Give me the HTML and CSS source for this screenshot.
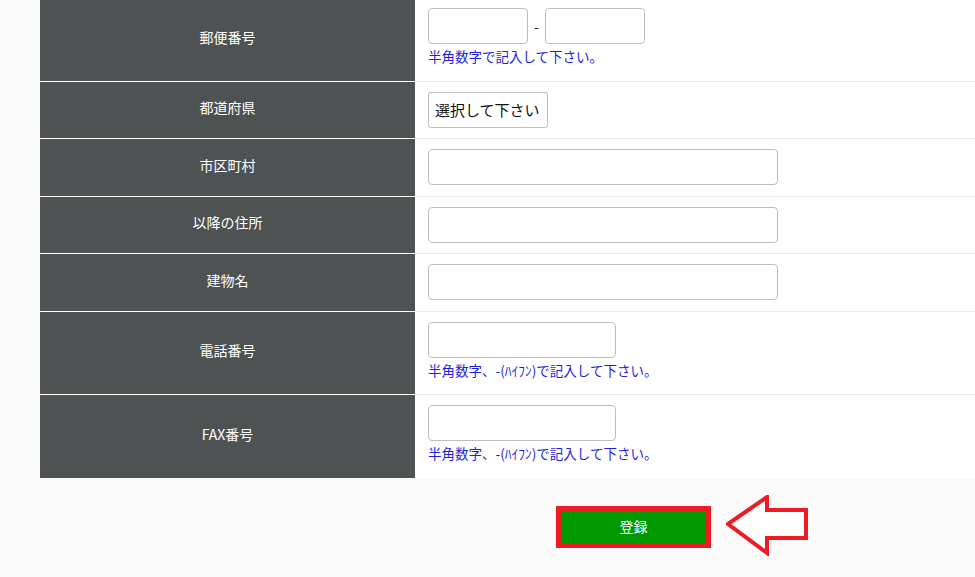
FILE: index.html
```html
<!DOCTYPE html>
<html lang="ja">
<head>
    <meta charset="UTF-8">
    <meta name="viewport" content="width=device-width, initial-scale=1.0">
    <title>会員登録</title>
    <link rel="stylesheet" href="styles.css">
</head>
<body>
    <div class="wrapper">
        <form onsubmit="return false">
            <table class="form-table">
                <tr class="tall">
                    <th>郵便番号</th>
                    <td>
                        <div class="zip">
                            <input type="text" class="input zip-input">
                            <span class="dash">-</span>
                            <input type="text" class="input zip-input">
                        </div>
                        <p class="note">半角数字で記入して下さい。</p>
                    </td>
                </tr>
                <tr>
                    <th>都道府県</th>
                    <td>
                        <select class="select">
                            <option>選択して下さい</option>
                        </select>
                    </td>
                </tr>
                <tr>
                    <th>市区町村</th>
                    <td><input type="text" class="input wide"></td>
                </tr>
                <tr>
                    <th>以降の住所</th>
                    <td><input type="text" class="input wide"></td>
                </tr>
                <tr>
                    <th>建物名</th>
                    <td><input type="text" class="input wide"></td>
                </tr>
                <tr class="tall">
                    <th>電話番号</th>
                    <td>
                        <input type="text" class="input tel">
                        <p class="note">半角数字、-(ﾊｲﾌﾝ)で記入して下さい。</p>
                    </td>
                </tr>
                <tr class="tall">
                    <th>FAX番号</th>
                    <td>
                        <input type="text" class="input tel">
                        <p class="note">半角数字、-(ﾊｲﾌﾝ)で記入して下さい。</p>
                    </td>
                </tr>
            </table>

            <div class="actions">
                <button type="submit" class="submit">登録</button>
                <svg class="arrow" width="84" height="61" viewBox="0 0 84 61">
                    <path d="M2 29 L41 2 L41 15 L80 15 L80 43 L41 43 L41 58 Z" fill="#fff" stroke="#ed1c24" stroke-width="4" stroke-linejoin="miter"/>
                </svg>
            </div>
        </form>
    </div>
</body>
</html>
```

FILE: styles.css
```css
body {
    margin: 0;
    background-color: #fafafa;
    font-family: "Noto Sans CJK JP", "Noto Sans", sans-serif;
    color: #222;
}
.wrapper {
    margin-top: -2px;
    padding-left: 40px;
}
.form-table {
    width: 100%;
    border-collapse: collapse;
}
.form-table th {
    width: 375px;
    padding: 0 0 5px;
    background: #4e5253;
    color: #fff;
    font-size: 14px;
    font-weight: normal;
    text-align: center;
    vertical-align: middle;
    border-bottom: 1px solid #fff;
}
.form-table td {
    background: #fff;
    padding: 10px 13px 10.5px;
    border-bottom: 1px solid #e9e9e9;
    vertical-align: top;
}
.form-table tr:last-child th,
.form-table tr:last-child td {
    border-bottom: none;
}
.input {
    box-sizing: border-box;
    display: block;
    height: 36px;
    margin: 0;
    border: 1px solid #bdbdbd;
    border-radius: 4px;
    background: #fff;
    font-size: 15px;
}
.zip {
    display: flex;
    align-items: center;
}
.zip-input {
    width: 100px;
}
.dash {
    width: 17px;
    text-align: center;
    font-size: 14px;
}
.wide {
    width: 350px;
}
.tel {
    width: 188px;
}
.select {
    box-sizing: border-box;
    appearance: none;
    -webkit-appearance: none;
    display: block;
    width: 120px;
    height: 36px;
    padding: 0 6px;
    border: 1px solid #bdbdbd;
    border-radius: 3px;
    background: #fff;
    color: #111;
    font-family: "Noto Sans CJK JP", sans-serif;
    font-size: 15px;
}
.note {
    margin: 2px 0 4px;
    line-height: 20px;
    font-size: 13.5px;
    color: #1f1fe0;
}
.actions {
    display: flex;
    align-items: flex-start;
    gap: 15px;
    margin-top: 17px;
    padding-left: 516px;
}
.submit {
    box-sizing: border-box;
    width: 155px;
    height: 42px;
    margin-top: 11px;
    padding: 0 0 2px;
    border: 5px solid #ed1c24;
    background: #009900;
    color: #fff;
    font-family: "Noto Sans CJK JP", sans-serif;
    font-size: 14px;
    cursor: pointer;
}
.arrow {
    display: block;
}
```
